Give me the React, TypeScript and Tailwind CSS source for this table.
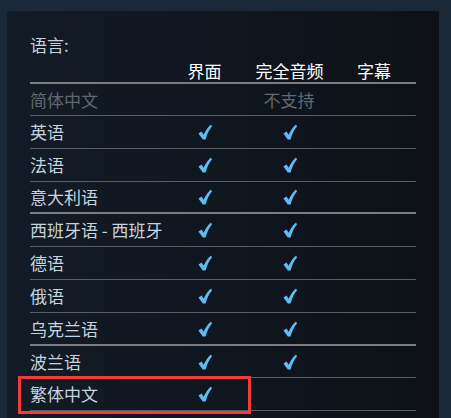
const font = { fontFamily: '"Noto Sans CJK SC", "Noto Sans", sans-serif' };

function Check() {
  return (
    <svg width="14" height="16" viewBox="0 0 14 16" className="inline-block">
      <path
        d="M0.4 9.4 L3.6 7.6 L5.6 10.8 C7.6 6.4 10 3 13 0.4 L14 2.6 C11.2 5.6 9.2 10 7.6 15.4 L4.8 15.6 Z"
        fill="#5fbbf6"
      />
    </svg>
  );
}

const rows = [
  { name: '英语', ui: true, audio: true, h: 'h-[33px]', thick: false },
  { name: '法语', ui: true, audio: true, h: 'h-[33px]', thick: false },
  { name: '意大利语', ui: true, audio: true, h: 'h-[32px]', thick: true },
  { name: '西班牙语 - 西班牙', ui: true, audio: true, h: 'h-[33px]', thick: false },
  { name: '德语', ui: true, audio: true, h: 'h-[33px]', thick: false },
  { name: '俄语', ui: true, audio: true, h: 'h-[33px]', thick: false },
  { name: '乌克兰语', ui: true, audio: true, h: 'h-[33px]', thick: true },
  { name: '波兰语', ui: true, audio: true, h: 'h-[32px]', thick: false },
  { name: '繁体中文', ui: true, audio: false, h: 'h-[33px]', thick: false, marked: true },
];

export default function App() {
  return (
    <div className="w-[451px] h-[418px] overflow-hidden bg-[#1b2838] pt-[11px] pl-[7px]" style={font}>
      <div className="w-[432px] h-[407px] bg-linear-to-r from-[#131b26] to-[#0d1117] pt-[22px] px-[23px] text-[17px] leading-[24px]">
        <div className="text-[#c6d4df]">语言:</div>
        <div className="grid grid-cols-[132px_85px_85px_1fr] h-[27px] pt-[2px] border-b-2 border-[#7b7d80] text-white">
          <div />
          <div className="text-center">界面</div>
          <div className="text-center">完全音频</div>
          <div className="text-center">字幕</div>
        </div>
        <div className="grid grid-cols-[132px_1fr] h-[32px] items-center border-b border-[#5a5e64] text-[#626870]">
          <div>简体中文</div>
          <div className="text-center">不支持</div>
        </div>
        {rows.map((r) => (
          <div
            key={r.name}
            className={`relative grid grid-cols-[132px_85px_85px_1fr] items-center text-[#c6d4df] ${r.h} ${
              r.thick ? 'border-b-2 border-[#7b7d80]' : 'border-b border-[#5a5e64]'
            }`}
          >
            <div className="whitespace-nowrap">{r.name}</div>
            <div className="flex justify-center">{r.ui && <Check />}</div>
            <div className="flex justify-center">{r.audio && <Check />}</div>
            <div />
            {r.marked && (
              <div className="absolute -left-[12px] -top-[2px] w-[233px] h-[38px] border-[3px] border-[#f23b3b]" />
            )}
          </div>
        ))}
      </div>
    </div>
  );
}
